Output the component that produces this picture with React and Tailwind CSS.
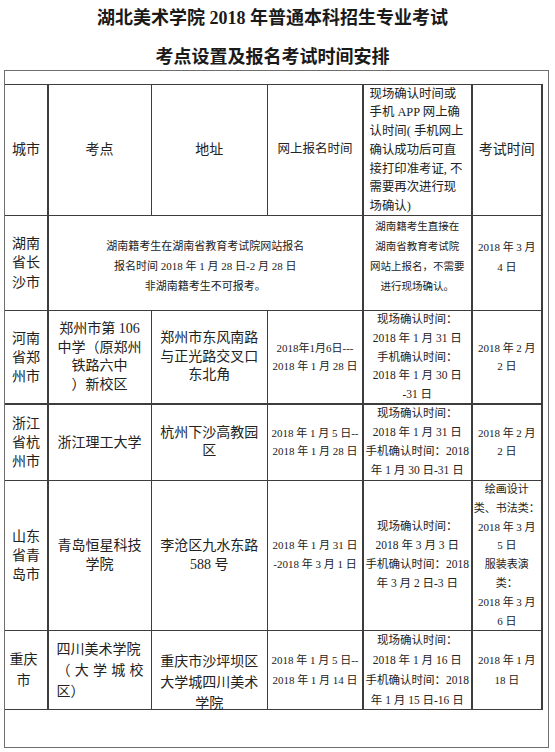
import React from 'react';

const Cell = ({ lines, className = '' }) => {
  return (
    <div className={`flex flex-col items-center justify-center bg-white text-center ${className}`}>
      {lines.map((line, i) => (
        <span key={i} className="whitespace-nowrap">
          {line}
        </span>
      ))}
    </div>
  );
};

const big = 'text-[14px] leading-[19px]';
const date = 'text-[11px] leading-[18.5px]';
const confirm = 'text-[11.5px] leading-[19px]';
const exam = 'text-[11px] leading-[18.8px]';

const App = () => {
  return (
    <div className="h-[752px] w-[555px] overflow-hidden bg-white font-['Liberation_Serif','Noto_Sans_CJK_SC',serif] text-[#222]">
      {/* title */}
      <div className="h-[70px] pt-[8px] pr-[10px] text-center font-bold text-[#1a1a1a]">
        <h1 className="text-[18px] leading-[20px]">湖北美术学院 2018 年普通本科招生专业考试</h1>
        <h2 className="mt-[19px] text-[18px] leading-[20px]">考点设置及报名考试时间安排</h2>
      </div>

      {/* outer frame */}
      <div className="ml-[4px] h-[678px] w-[545px] border-[1.5px] border-[#6e6e6e]">
        <div className="mt-[12.5px] grid w-[537.5px] grid-cols-[42px_102px_114.5px_94px_107.5px_68.5px] grid-rows-[130px_93.5px_92px_75px_148.5px_78px] gap-[1.5px] border-y-[1.5px] border-r-[1.5px] border-[#3d3d3d] bg-[#3d3d3d]">
          {/* header */}
          <Cell lines={['城市']} className={big} />
          <Cell lines={['考点']} className={big} />
          <Cell lines={['地址']} className={big} />
          <Cell lines={['网上报名时间']} className="text-[12.5px] leading-[19px]" />
          <div className="flex flex-col justify-start bg-white pl-[6px] text-left text-[12.4px] leading-[18.8px]">
            <span className="whitespace-nowrap">现场确认时间或</span>
            <span className="whitespace-nowrap">手机 APP 网上确</span>
            <span className="whitespace-nowrap">认时间( 手机网上</span>
            <span className="whitespace-nowrap">确认成功后可直</span>
            <span className="whitespace-nowrap">接打印准考证, 不</span>
            <span className="whitespace-nowrap">需要再次进行现</span>
            <span className="whitespace-nowrap">场确认)</span>
          </div>
          <Cell lines={['考试时间']} className={big} />

          {/* 湖南 */}
          <Cell lines={['湖南', '省长', '沙市']} className="text-[14px] leading-[19.5px]" />
          <Cell
            lines={['湖南籍考生在湖南省教育考试院网站报名', '报名时间 2018 年 1 月 28 日-2 月 28 日', '非湖南籍考生不可报考。']}
            className="col-span-3 pt-[6px] text-[11px] leading-[20px]"
          />
          <Cell
            lines={['湖南籍考生直接在', '湖南省教育考试院', '网站上报名，不需要', '进行现场确认。']}
            className="pb-[12px] text-[10.5px] leading-[20px]"
          />
          <Cell lines={['2018 年 3 月', '4 日']} className="pb-[12px] text-[11px] leading-[20px]" />

          {/* 河南 */}
          <Cell lines={['河南', '省郑', '州市']} className={big} />
          <Cell lines={['郑州市第 106', '中学（原郑州', '铁路六中', '）新校区']} className="text-[14px] leading-[18.5px]" />
          <Cell lines={['郑州市东风南路', '与正光路交叉口', '东北角']} className="text-[14px] leading-[18.5px]" />
          <Cell lines={['2018年1月6日---', '2018 年 1 月 28 日']} className={date} />
          <Cell
            lines={['现场确认时间：', '2018 年 1 月 31 日', '手机确认时间：', '2018 年 1 月 30 日', '-31 日']}
            className="text-[11.5px] leading-[18.75px]"
          />
          <Cell lines={['2018 年 2 月', '2 日']} className={date} />

          {/* 浙江 */}
          <Cell lines={['浙江', '省杭', '州市']} className={big} />
          <Cell lines={['浙江理工大学']} className={big} />
          <Cell lines={['杭州下沙高教园', '区']} className="text-[14px] leading-[18.5px]" />
          <Cell lines={['2018 年 1 月 5 日--', '2018 年 1 月 28 日']} className={date} />
          <Cell
            lines={['现场确认时间：', '2018 年 1 月 31 日', '手机确认时间：2018', '年 1 月 30 日-31 日']}
            className={confirm}
          />
          <Cell lines={['2018 年 2 月', '2 日']} className={date} />

          {/* 山东 */}
          <Cell lines={['山东', '省青', '岛市']} className={big} />
          <Cell lines={['青岛恒星科技', '学院']} className={big} />
          <Cell lines={['李沧区九水东路', '588 号']} className={big} />
          <Cell lines={['2018 年 1 月 31 日', '-2018 年 3 月 1 日']} className="text-[11px] leading-[19px]" />
          <Cell
            lines={['现场确认时间：', '2018 年 3 月 3 日', '手机确认时间：2018', '年 3 月 2 日-3 日']}
            className={confirm}
          />
          <Cell
            lines={['绘画设计', '类、书法类：', '2018 年 3 月', '5 日', '服装表演', '类：', '2018 年 3 月', '6 日']}
            className={exam}
          />

          {/* 重庆 */}
          <Cell lines={['重庆', '市']} className="pr-[5px] text-[14px] leading-[21px]" />
          <div className="flex flex-col justify-center bg-white pl-[8px] text-left text-[14px] leading-[21px]">
            <span className="whitespace-nowrap">四川美术学院</span>
            <span className="flex w-[87px] justify-between">
              <span>（</span>
              <span>大</span>
              <span>学</span>
              <span>城</span>
              <span>校</span>
            </span>
            <span className="whitespace-nowrap">区）</span>
          </div>
          <Cell
            lines={['重庆市沙坪坝区', '大学城四川美术', '学院']}
            className="!justify-start pt-[19.5px] text-[14px] leading-[21px]"
          />
          <Cell lines={['2018 年 1 月 5 日--', '2018 年 1 月 14 日']} className="text-[11px] leading-[20px]" />
          <Cell
            lines={['现场确认时间：', '2018 年 1 月 16 日', '手机确认时间：2018', '年 1 月 15 日-16 日']}
            className="text-[11.5px] leading-[20px]"
          />
          <Cell lines={['2018 年 1 月', '18 日']} className="text-[11px] leading-[20px]" />
        </div>
      </div>
    </div>
  );
};

export default App;
